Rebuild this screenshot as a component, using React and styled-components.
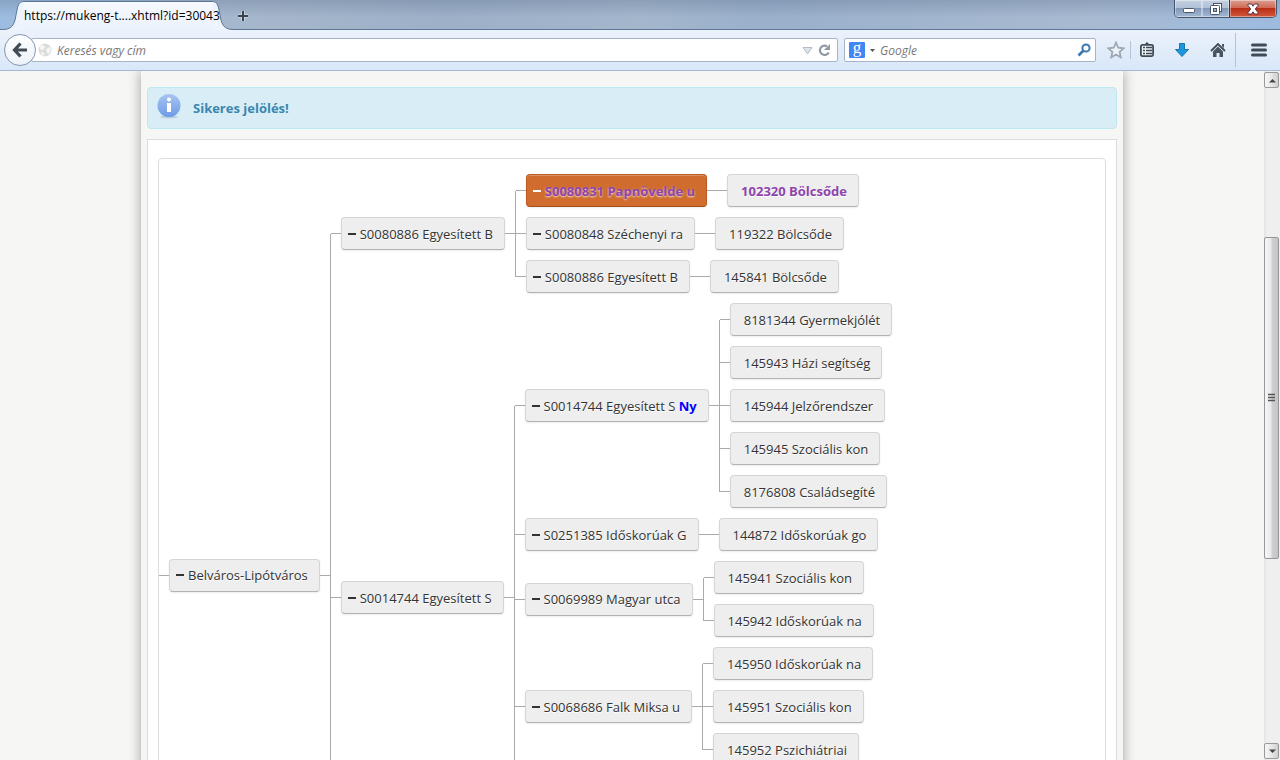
import styled, { createGlobalStyle } from 'styled-components';

const tree = {
  label: 'Belváros-Lipótváros',
  children: [
    {
      label: 'S0080886 Egyesített B',
      children: [
        {
          label: 'S0080831 Papnövelde u',
          selected: true,
          marked: true,
          children: [{ label: '102320 Bölcsőde', marked: true }],
        },
        {
          label: 'S0080848 Széchenyi ra',
          children: [{ label: '119322 Bölcsőde' }],
        },
        {
          label: 'S0080886 Egyesített B',
          children: [{ label: '145841 Bölcsőde' }],
        },
      ],
    },
    {
      label: 'S0014744 Egyesített S',
      children: [
        {
          label: 'S0014744 Egyesített S',
          tag: 'Ny',
          children: [
            { label: '8181344 Gyermekjólét' },
            { label: '145943 Házi segítség' },
            { label: '145944 Jelzőrendszer' },
            { label: '145945 Szociális kon' },
            { label: '8176808 Családsegíté' },
          ],
        },
        {
          label: 'S0251385 Időskorúak G',
          children: [{ label: '144872 Időskorúak go' }],
        },
        {
          label: 'S0069989 Magyar utca',
          children: [
            { label: '145941 Szociális kon' },
            { label: '145942 Időskorúak na' },
          ],
        },
        {
          label: 'S0068686 Falk Miksa u',
          children: [
            { label: '145950 Időskorúak na' },
            { label: '145951 Szociális kon' },
            { label: '145952 Pszichiátriai' },
          ],
        },
        { pendingRows: 3 },
      ],
    },
    { pendingRows: 2 },
  ],
};

const TreeItem = ({ node, first, last }) => {
  const alone = first && last;
  const children = node.children || [];

  return (
    <Branch>
      {!alone && (
        <Rail>
          <RailHalf $on={!first} />
          <RailHalf $on={!last} />
        </Rail>
      )}
      {node.pendingRows ? (
        <Pending $rows={node.pendingRows} />
      ) : (
        <>
          <Stub />
          <NodeButton
            type="button"
            $leaf={!children.length}
            $selected={node.selected}
            $marked={node.marked}
          >
            {children.length > 0 && <Minus $light={node.selected} />}
            <span>
              {node.label}
              {node.tag && <Tag> {node.tag}</Tag>}
            </span>
          </NodeButton>
        </>
      )}
      {children.length > 0 && (
        <>
          <Stub />
          <BranchList>
            {children.map((child, i) => (
              <TreeItem
                key={i}
                node={child}
                first={i === 0}
                last={i === children.length - 1}
              />
            ))}
          </BranchList>
        </>
      )}
    </Branch>
  );
};

const Browser = () => (
  <header>
    <TitleBar>
      <TabShape>
        <TabEdge viewBox="0 0 22 30">
          <path d="M0 30V29.500C8 29.500 11 27 13 20L15 10C16 4 18 1.500 22 1.500V30Z" fill="#eef4fc" />
          <path d="M0 29.500C8 29.500 11 27 13 20L15 10C16 4 18 1.500 22 1.500" fill="none" stroke="#5d7795" />
        </TabEdge>
        <TabLabel>https://mukeng-t....xhtml?id=30043</TabLabel>
        <TabEdge viewBox="0 0 22 30">
          <path d="M22 30V29.500C14 29.500 11 27 9 20L7 10C6 4 4 1.500 0 1.500V30Z" fill="#eef4fc" />
          <path d="M22 29.500C14 29.500 11 27 9 20L7 10C6 4 4 1.500 0 1.500" fill="none" stroke="#5d7795" />
        </TabEdge>
      </TabShape>
      <PlainButton type="button" aria-label="Új lap">
        <svg width="12" height="12" viewBox="0 0 12 12">
          <path d="M6 1v10M1 6h10" stroke="#e6eef6" strokeWidth="4" opacity=".5" />
          <path d="M6 1v10M1 6h10" stroke="#39444f" strokeWidth="2" />
        </svg>
      </PlainButton>
      <WindowButtons>
        <WindowButton type="button" aria-label="Kis méret">
          <svg width="14" height="12" viewBox="0 0 14 12">
            <rect x="1.500" y="5.500" width="11" height="4" rx="1" fill="#fff" stroke="#4b5468" />
          </svg>
        </WindowButton>
        <WindowButton type="button" aria-label="Előző méret">
          <svg width="14" height="14" viewBox="0 0 14 14">
            <rect x="4.500" y="1.500" width="8" height="8" fill="#fff" stroke="#4b5468" />
            <rect x="1.500" y="3.500" width="9" height="9" rx="1" fill="#fff" stroke="#4b5468" />
            <rect x="4.500" y="6.500" width="3" height="3" fill="#9fb3cd" stroke="#4b5468" />
          </svg>
        </WindowButton>
        <WindowButton type="button" aria-label="Bezárás" $close>
          <svg width="14" height="12" viewBox="0 0 14 12">
            <path d="M2 1h3.500L7 3.200 8.500 1H12v1.500L9.300 6l2.700 3.500V11H8.500L7 8.800 5.500 11H2V9.500L4.700 6 2 2.500z" fill="#fff" stroke="#5c3540" />
          </svg>
        </WindowButton>
      </WindowButtons>
    </TitleBar>
    <NavBar>
      <BackButton type="button" aria-label="Vissza">
        <svg width="16" height="16" viewBox="0 0 16 16">
          <path d="M8.500 1.500L2.500 8l6 6.500M3 8h12" fill="none" stroke="#414b55" strokeWidth="3.200" />
        </svg>
      </BackButton>
      <AddressBar>
        <svg width="14" height="14" viewBox="0 0 14 14">
          <circle cx="7" cy="7" r="6.500" fill="#dcdcdc" />
          <path d="M2 3l3-1 2 2-1 2-2 1-2-1zM8 6l4-2 1 3-2 4-2-1zM3 9l3 1v3l-3-2z" fill="#f6f6f6" />
        </svg>
        <BarInput aria-label="Cím" placeholder="Keresés vagy cím" />
        <svg width="11" height="9" viewBox="0 0 11 9">
          <path d="M1 1.500h9L5.500 8z" fill="#dfe3ea" stroke="#b4bcc8" />
        </svg>
        <svg width="13" height="14" viewBox="0 0 13 14">
          <path d="M10.800 9.500A4.700 4.700 0 1 1 9 3.200" fill="none" stroke="#8f99a6" strokeWidth="2.200" />
          <path d="M12 1v6H6z" fill="#8f99a6" />
        </svg>
      </AddressBar>
      <SearchBar>
        <Engine>g</Engine>
        <svg width="5" height="3" viewBox="0 0 5 3">
          <path d="M0 0h5L2.500 3z" fill="#555" />
        </svg>
        <BarInput aria-label="Keresés" placeholder="Google" />
        <svg width="14" height="14" viewBox="0 0 14 14">
          <circle cx="9" cy="5" r="3.600" fill="none" stroke="#3b77b0" strokeWidth="2" />
          <path d="M6.500 7.500L1.500 12.500" stroke="#3b77b0" strokeWidth="2.600" />
        </svg>
      </SearchBar>
      <ToolButton type="button" aria-label="Könyvjelzőzés" $width={24}>
        <svg width="18" height="18" viewBox="0 0 16 16">
          <path d="M8 1.500l2 4.500 4.800.5-3.600 3.200 1 4.800L8 12l-4.200 2.500 1-4.800L1.200 6.500 6 6z" fill="#eef3f9" stroke="#9ea8b4" strokeWidth="1.600" />
        </svg>
      </ToolButton>
      <Divider $height={18} />
      <ToolButton type="button" aria-label="Könyvjelzők" $width={28}>
        <svg width="16" height="16" viewBox="0 0 16 16">
          <path d="M4.500 3.500L8 0l3.500 3.500z" fill="#414b55" />
          <rect x="1.900" y="2.900" width="12.200" height="11.200" rx="1.500" fill="#eef3f9" stroke="#414b55" strokeWidth="1.800" />
          <path d="M4 5.500h2M7 5.500h6M4 8.500h2M7 8.500h6M4 11.500h2M7 11.500h6" stroke="#414b55" strokeWidth="1.400" />
        </svg>
      </ToolButton>
      <ToolButton type="button" aria-label="Letöltések" $width={42}>
        <svg width="16" height="16" viewBox="0 0 16 16">
          <path d="M5.500 1.500h5v6h4L8 14.500 1.500 7.500h4z" fill="#1b98dc" stroke="#1774ae" />
        </svg>
      </ToolButton>
      <ToolButton type="button" aria-label="Kezdőlap" $width={30}>
        <svg width="16" height="16" viewBox="0 0 16 16">
          <path d="M1 9l7-7 7 7" fill="none" stroke="#414b55" strokeWidth="1.800" />
          <path d="M12 2h2v4l-2-2zM3 9.500l5-5 5 5V15H9.500v-4h-3v4H3z" fill="#4b555f" />
        </svg>
      </ToolButton>
      <Divider $height={34} />
      <ToolButton type="button" aria-label="Menü" $width={42}>
        <svg width="16" height="14" viewBox="0 0 16 14">
          <path d="M1.500 2h13M1.500 7h13M1.500 12h13" stroke="#414b55" strokeWidth="3" strokeLinecap="round" />
        </svg>
      </ToolButton>
    </NavBar>
  </header>
);

const App = () => {
  return (
    <>
      <GlobalStyle />
      <Window>
        <Browser />
        <Viewport>
          <Page>
            <Content>
              <Message role="status">
                <InfoIcon viewBox="0 0 26 26">
                  <defs>
                    <linearGradient id="info" x1="0" y1="0" x2="0" y2="1">
                      <stop offset="0" stopColor="#a9c4f2" />
                      <stop offset="1" stopColor="#6d9be6" />
                    </linearGradient>
                  </defs>
                  <ellipse cx="13" cy="24" rx="9" ry="1.500" fill="#b9cfdc" />
                  <circle cx="13" cy="12.500" r="11.500" fill="url(#info)" />
                  <circle cx="13" cy="6.500" r="2" fill="#fff" />
                  <path d="M11 10h4v9h-4z" fill="#fff" />
                </InfoIcon>
                Sikeres jelölés!
              </Message>
              <Panel>
                <TreeBox>
                  <BranchList>
                    <TreeItem node={tree} first last />
                  </BranchList>
                </TreeBox>
              </Panel>
            </Content>
          </Page>
          <ScrollBar>
            <ScrollButton type="button" aria-label="Fel" tabIndex={-1}>
              <svg width="8" height="5" viewBox="0 0 8 5">
                <path d="M1 4.500L4.500 1 8 4.500z" fill="#444" />
              </svg>
            </ScrollButton>
            <Track $grow={149} />
            <Thumb $grow={321}>
              <svg width="7" height="9" viewBox="0 0 7 9">
                <path d="M0 1.500h7M0 4.500h7M0 7.500h7" stroke="#555" strokeWidth="1.500" />
              </svg>
            </Thumb>
            <Track $grow={185} />
            <ScrollButton type="button" aria-label="Le" tabIndex={-1}>
              <svg width="8" height="5" viewBox="0 0 8 5">
                <path d="M1 .5h7L4.500 4z" fill="#444" />
              </svg>
            </ScrollButton>
          </ScrollBar>
        </Viewport>
      </Window>
    </>
  );
};

const GlobalStyle = createGlobalStyle`
  * {
    box-sizing: border-box;
  }
  body {
    margin: 0;
    font-family: 'Open Sans', 'Noto Sans', sans-serif;
    font-size: 13px;
    color: #333;
  }
  button, input {
    font: inherit;
    color: inherit;
  }
  svg {
    flex: none;
    display: block;
  }
`;

const Window = styled.div`
  display: flex;
  flex-direction: column;
  height: 100vh;
  overflow: hidden;
`;

const TitleBar = styled.div`
  display: flex;
  align-items: flex-start;
  height: 30px;
  border-bottom: 1px solid #5d7795;
  background:
    linear-gradient(to bottom, rgba(70, 90, 120, 0.25), rgba(255, 255, 255, 0) 60%),
    linear-gradient(to right, #9dbde0, #a6b7cb 20%, #9db0c8 35%, #a3b6cc 50%, #9ab0cb 60%, #a8bad1 85%, #9dbbdf);
`;

const TabShape = styled.div`
  display: flex;
  height: 30px;
  margin-left: 2px;
`;
const TabEdge = styled.svg`
  width: 22px;
  height: 30px;
`;
/* the label may run a little over the slanted edge */
const TabLabel = styled.div`
  z-index: 1;
  width: 188px;
  margin-top: 1px;
  border-top: 1px solid #5d7795;
  background: linear-gradient(#f6f9fd, #ebf2fb);
  color: #000;
  font-size: 12px;
  line-height: 28px;
  white-space: nowrap;
`;

const PlainButton = styled.button`
  display: flex;
  margin-top: 10px;
  margin-left: 3px;
  padding: 0;
  border: 0;
  background: none;
`;

const WindowButtons = styled.div`
  display: flex;
  margin-left: auto;
  margin-right: 3px;
  border: 1px solid #45566c;
  border-top: 0;
  border-radius: 0 0 5px 5px;
  overflow: hidden;
`;
const WindowButton = styled.button`
  display: flex;
  align-items: center;
  justify-content: center;
  width: ${(props) => (props.$close ? 47 : 27)}px;
  height: 17px;
  padding: 0;
  border: 0;
  border-left: ${(props) => (props.$close ? '1px solid #5c2a26' : '0')};
  box-shadow: inset 0 0 0 1px rgba(255, 255, 255, 0.4);
  background: ${(props) =>
    props.$close
      ? 'linear-gradient(#dda092, #cf6a55 45%, #b82f16 50%, #d4583c)'
      : 'linear-gradient(#c3d0e0, #b1c2d7 45%, #8199b8 50%, #a3b9d4)'};
`;

const NavBar = styled.div`
  display: flex;
  align-items: center;
  height: 41px;
  padding-left: 4px;
  border-bottom: 1px solid #a5b8d3;
  background: linear-gradient(#ebf2fb, #d9e7f8);
`;

const BackButton = styled.button`
  display: flex;
  align-items: center;
  justify-content: center;
  flex: none;
  width: 32px;
  height: 32px;
  padding: 0;
  border: 1px solid #8497b0;
  border-radius: 50%;
  background: linear-gradient(#fdfeff, #edf3fb);
  z-index: 1;
`;

const Bar = styled.div`
  display: flex;
  align-items: center;
  height: 24px;
  border: 1px solid #a5b5c9;
  border-radius: 2px;
  background: #fff;
`;
const AddressBar = styled(Bar)`
  flex: 1;
  gap: 5px;
  margin-left: -5px;
  padding: 0 6px 0 6px;
`;
const SearchBar = styled(Bar)`
  gap: 5px;
  width: 252px;
  margin: 0 8px 0 6px;
  padding: 0 4px;
`;
const BarInput = styled.input`
  flex: 1;
  min-width: 0;
  padding: 0;
  border: 0;
  outline: 0;
  background: none;
  font-size: 12px;
  font-style: italic;
  &::placeholder {
    color: #777;
    opacity: 1;
  }
`;
const Engine = styled.span`
  width: 16px;
  height: 16px;
  border-radius: 1px;
  background: #4285f4;
  color: #fff;
  font-family: 'Liberation Serif', serif;
  font-size: 17px;
  line-height: 12px;
  text-align: center;
`;

const ToolButton = styled.button`
  display: flex;
  align-items: center;
  justify-content: center;
  width: ${(props) => props.$width}px;
  height: 30px;
  padding: 0;
  border: 0;
  background: none;
`;
const Divider = styled.div`
  width: 1px;
  height: ${(props) => props.$height}px;
  margin: 0 2px;
  background: #b3c3d8;
`;

const Viewport = styled.div`
  display: flex;
  flex: 1;
  min-height: 0;
  background: #f6f6f4;
`;
const Page = styled.main`
  flex: 1;
  min-width: 0;
  overflow: hidden;
`;
const Content = styled.div`
  max-width: 982px;
  margin: 0 auto;
  padding: 16px 6px;
  box-shadow: 0 0 12px rgba(0, 0, 0, 0.35);
`;

const Message = styled.div`
  display: flex;
  align-items: center;
  gap: 11px;
  height: 42px;
  padding: 0 8px;
  border: 1px solid #bce8f1;
  border-radius: 4px;
  background: #d9edf7;
  color: #3a87ad;
  font-weight: 700;
`;
const InfoIcon = styled.svg`
  width: 26px;
  height: 26px;
  margin-bottom: 4px;
`;

const Panel = styled.div`
  margin-top: 10px;
  padding: 18px 10px;
  border: 1px solid #ddd;
  background: #fff;
`;
const TreeBox = styled.div`
  padding: 10px 0;
  border: 1px solid #ddd;
  border-radius: 4px;
`;

const BranchList = styled.ul`
  display: flex;
  flex-direction: column;
  margin: 0;
  padding: 0;
  list-style: none;
`;
const Branch = styled.li`
  display: flex;
  align-items: center;
`;

/* vertical line between siblings, each half is drawn only if there is a neighbour */
const Rail = styled.div`
  display: flex;
  flex-direction: column;
  align-self: stretch;
  width: 1px;
`;
const RailHalf = styled.div`
  flex: 1;
  background: ${(props) => (props.$on ? '#aaa' : 'transparent')};
`;
const Stub = styled.div`
  flex: none;
  width: 10px;
  height: 1px;
  background: #aaa;
`;
/* rows that are not loaded yet */
const Pending = styled.div`
  height: ${(props) => props.$rows * 42}px;
`;

const NodeButton = styled.button`
  display: flex;
  align-items: center;
  gap: 4px;
  height: 33px;
  margin: 5px 0;
  padding: 0 11px 0 ${(props) => (props.$leaf ? 13 : 6)}px;
  border: 1px solid ${(props) => (props.$selected ? '#b85c22' : '#d5d5d5')};
  border-bottom-color: ${(props) => (props.$selected ? '#a54f1a' : '#b3b3b3')};
  border-radius: 4px;
  background: ${(props) => (props.$selected ? '#d06d2e' : '#eee')};
  box-shadow: 0 1px 2px rgba(0, 0, 0, 0.08)
    ${(props) => props.$selected && ', inset 0 1px 0 rgba(255, 255, 255, 0.25)'};
  color: ${(props) => (props.$marked ? '#8e44ad' : '#333')};
  font-weight: ${(props) => (props.$marked ? 700 : 400)};
  text-shadow: ${(props) =>
    props.$selected ? '0 1px 2px rgba(255, 255, 255, 0.8)' : '0 1px 0 #fff'};
  white-space: nowrap;
`;
const Minus = styled.span`
  width: 8px;
  height: 2px;
  background: ${(props) => (props.$light ? '#fff' : '#333')};
`;
const Tag = styled.b`
  color: #00f;
`;

const ScrollBar = styled.div`
  display: flex;
  flex-direction: column;
  width: 16px;
  padding: 1px 1px 1px 0;
  background: linear-gradient(to right, #e3e3e3, #efefef 3px);
`;
const ScrollButton = styled.button`
  display: flex;
  align-items: center;
  justify-content: center;
  height: 16px;
  padding: 0;
  border: 1px solid #999;
  border-radius: 2px;
  background: linear-gradient(to right, #f6f6f6, #e9e9eb 45%, #cfcfd3);
`;
const Track = styled.div`
  flex: ${(props) => props.$grow};
`;
const Thumb = styled.div`
  display: flex;
  align-items: center;
  justify-content: center;
  flex: ${(props) => props.$grow};
  border: 1px solid #979797;
  border-radius: 2px;
  background: linear-gradient(to right, #f6f6f6, #e9e9eb 45%, #cfcfd3 55%, #c4c4c8);
`;

export default App;
